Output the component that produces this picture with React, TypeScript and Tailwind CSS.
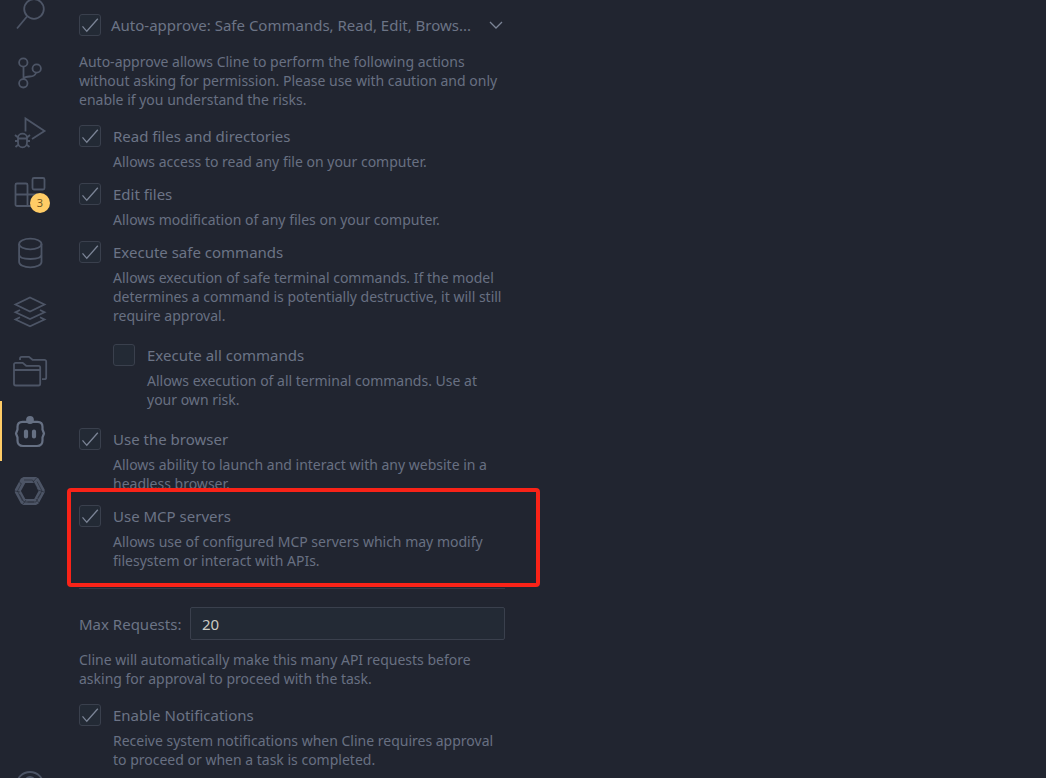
import { useState, type ReactNode } from 'react';

const stroke = 'fill-none stroke-[#4d5566]';

type Entry = { name: string; top: number; height: number; active?: boolean; badge?: string; art: ReactNode };

const entries: Entry[] = [
  {
    name: 'Search', top: 0, height: 41,
    art: <><circle cx="34" cy="9" r="9.8" /><path d="M27 16.5 17 28.5" /></>,
  },
  {
    name: 'Source control', top: 41, height: 60,
    art: <><circle cx="23.3" cy="62.5" r="4.2" /><circle cx="36.7" cy="68.5" r="4.2" /><circle cx="23.3" cy="83.3" r="4.2" /><path d="M23.500 67v12M36 73c-1 2.500-3 3.500-6 3.500-3.500 0-5.500.3-6.500 2.500" /></>,
  },
  {
    name: 'Run and debug', top: 101, height: 60,
    art: <><path d="M25.500 131.500v-13l19 12.500-12.500 8" /><path d="M18 138.500v-1a4.500 3.800 0 0 1 9 0v1M18 138.500h9v4a4.500 4.800 0 0 1-9 0zM15 135l3 2.500M30 135l-3 2.500M15 141h3M27 141h3M15.500 147l3-2.500M29.500 147l-3-2.500" /></>,
  },
  {
    name: 'Extensions', top: 161, height: 60, badge: '3',
    art: <><rect x="32.500" y="178" width="12" height="11.500" rx="1.500" /><path d="M27.500 194.500v-9.500a1.500 1.500 0 0 0-1.500-1.500h-9a1.500 1.500 0 0 0-1.500 1.500v19.500a1.500 1.500 0 0 0 1.500 1.500h20a1.500 1.500 0 0 0 1.500-1.500v-10zM15.500 194.500h12v11.500" /></>,
  },
  {
    name: 'Database', top: 221, height: 60,
    art: <><ellipse cx="30.300" cy="244" rx="11.200" ry="5.300" /><path d="M19.100 244v18c0 3 5 5.300 11.200 5.300s11.200-2.300 11.200-5.300v-18M19.100 254.500c0 3 5 4.500 11.200 4.500s11.200-1.500 11.200-4.500" /></>,
  },
  {
    name: 'Layers', top: 281, height: 60,
    art: <path d="m30 297.500 14.500 7-14.500 7-14.500-7zM20 310l-4.500 2.200 14.500 6.800 14.500-6.800-4.500-2.200M20 317.200l-4.500 2.300 14.500 6.700 14.500-6.700-4.500-2.300" />,
  },
  {
    name: 'Projects', top: 341, height: 60,
    art: <><path d="M14 370v-5.500a1.700 1.700 0 0 1 1.700-1.700h7l3.500 3h12.300a1.700 1.700 0 0 1 1.700 1.700v16.300a1.700 1.700 0 0 1-1.700 1.700H15.700a1.700 1.700 0 0 1-1.700-1.700zh26.200" /><path d="M20 360v-1.500a1.700 1.700 0 0 1 1.700-1.700h7.300l3.500 3h12a1.700 1.700 0 0 1 1.700 1.700v16a1.700 1.700 0 0 1-1.700 1.700H42" /></>,
  },
  {
    name: 'Cline', top: 401, height: 60, active: true,
    art: <><path d="M22.500 421.800h15q5 0 5 5v2.700l1.500 4-1.500 4v3q0 5.500-5.500 5.500h-14q-5.500 0-5.500-5.500v-3l-1.500-4 1.500-4v-2.700q0-5 5-5z" strokeLinejoin="round" strokeWidth="2.2" /><circle cx="30" cy="420" r="3.900" className="fill-[#667083] stroke-none" /><path d="M26 431.500v5M34 431.500v5" strokeWidth="4.200" strokeLinecap="round" /></>,
  },
  {
    name: 'AI assistant', top: 461, height: 60,
    art: <><path d="M23.500 480h12.500l6 11-6 11H23.500L17.500 491z" strokeWidth="6" strokeLinejoin="bevel" /><g className="stroke-[#212530]/70" strokeWidth="0.8"><path d="M24 480h8.500l4.500 8M33 482l3.500-4M37 481.500l5 9.500-4.300 7M38 490l6 2M41 493.500l-5 8.500h-8.500M36 499l3 4M34 502h-10l-4.500-8M26 500l-3 4M22.500 501 17.500 491l4-7.500M20 492l-5-1M21 484l-2-3" /></g></>,
  },
];

const account: Entry = {
  name: 'Account', top: 755, height: 23,
  art: <><circle cx="30" cy="785.500" r="13.500" /><circle cx="30" cy="782" r="5" /></>,
};

function ActivityButton({ entry }: { entry: Entry }) {
  return (
    <button type="button" aria-label={entry.name} className="relative block w-full shrink-0">
      {entry.active && <span className="absolute inset-y-0 left-0 w-0.5 bg-[#ffcc66]" />}
      <svg
        width="60"
        height={entry.height}
        viewBox={`0 ${entry.top} 60 ${entry.height}`}
        strokeWidth="1.8"
        className={entry.active ? 'block fill-none stroke-[#667083]' : `block ${stroke}`}
      >
        {entry.art}
      </svg>
      {entry.badge && (
        <span className="absolute right-2.5 bottom-2 flex size-5 items-center justify-center rounded-full bg-[#ffcc66] text-[11px] text-[#735923]">
          {entry.badge}
        </span>
      )}
    </button>
  );
}

function Check({ id, initial = true, label }: { id: string; initial?: boolean; label?: string }) {
  const [checked, setChecked] = useState(initial);
  return (
    <span className="grid size-[22px] shrink-0">
      <input
        id={id}
        type="checkbox"
        aria-label={label}
        checked={checked}
        onChange={(e) => setChecked(e.target.checked)}
        className="col-start-1 row-start-1 size-[22px] appearance-none rounded-[3px] border border-[#3a404d] bg-[#232a35]"
      />
      {checked && (
        <svg viewBox="0 0 22 22" className="pointer-events-none col-start-1 row-start-1 size-[22px] fill-none stroke-[#7b8496]" strokeWidth="1.3">
          <path d="m3.500 12.300 4.300 5L18.800 4.800" />
        </svg>
      )}
    </span>
  );
}

type OptionProps = { id: string; title: string; lines: string[]; initial?: boolean; children?: ReactNode };

function Option({ id, title, lines, initial, children }: OptionProps) {
  return (
    <div className="relative">
      <div className="flex h-[22px] items-center gap-3">
        <Check id={id} initial={initial} />
        <label htmlFor={id} className="text-[15px] leading-6 whitespace-nowrap">{title}</label>
      </div>
      <Lines lines={lines} className="mt-[5px] pl-[34px]" />
      {children}
    </div>
  );
}

function Lines({ lines, className = '' }: { lines: string[]; className?: string }) {
  return (
    <p className={`text-sm leading-[19px] whitespace-nowrap text-[#687082] ${className}`}>
      {lines.map((line) => <span key={line} className="block">{line}</span>)}
    </p>
  );
}

export default function App() {
  return (
    <div className="flex h-screen overflow-hidden bg-[#212530] font-['Noto_Sans',sans-serif] text-[#6c7486]">
      <nav aria-label="Activity bar" className="flex w-15 shrink-0 flex-col justify-between">
        <div>{entries.map((entry) => <ActivityButton key={entry.name} entry={entry} />)}</div>
        <ActivityButton entry={account} />
      </nav>

      <main className="w-full max-w-[445px] pt-3.5 pl-[19px]">
        <div className="flex h-[22px] items-center">
          <Check id="auto" label="Enable auto-approve" />
          <button type="button" aria-expanded="true" className="ml-2.5 flex min-w-0 flex-1 items-center justify-between pr-0.5 text-left">
            <span className="text-[15px] leading-6 whitespace-nowrap">Auto-approve: Safe Commands, Read, Edit, Brows...</span>
            <svg viewBox="0 0 14 8" className="h-2 w-3.5 shrink-0 fill-none stroke-[#7b8496]" strokeWidth="1.3"><path d="m1 1 6 6 6-6" /></svg>
          </button>
        </div>

        <Lines
          className="mt-4"
          lines={[
            'Auto-approve allows Cline to perform the following actions',
            'without asking for permission. Please use with caution and only',
            'enable if you understand the risks.',
          ]}
        />

        <div className="mt-4 flex flex-col gap-3">
          <Option id="read" title="Read files and directories" lines={['Allows access to read any file on your computer.']} />
          <Option id="edit" title="Edit files" lines={['Allows modification of any files on your computer.']} />
          <Option
            id="safe"
            title="Execute safe commands"
            lines={['Allows execution of safe terminal commands. If the model', 'determines a command is potentially destructive, it will still', 'require approval.']}
          >
            <div className="mt-[19px] mb-[7px] pl-[34px]">
              <Option
                id="all"
                title="Execute all commands"
                initial={false}
                lines={['Allows execution of all terminal commands. Use at', 'your own risk.']}
              />
            </div>
          </Option>
          <Option id="browser" title="Use the browser" lines={['Allows ability to launch and interact with any website in a', 'headless browser.']} />
          <Option id="mcp" title="Use MCP servers" lines={['Allows use of configured MCP servers which may modify', 'filesystem or interact with APIs.']}>
            <div className="pointer-events-none absolute -inset-y-[17px] -right-[35px] -left-3 rounded-sm border-4 border-[#f92318]" />
          </Option>
        </div>

        <hr className="mt-[18px] border-[#343a46]" />

        <div className="mt-[18px] flex items-center gap-2">
          <label htmlFor="max" className="w-[103px] text-[15px] leading-6 whitespace-nowrap">Max Requests:</label>
          <input
            id="max"
            type="text"
            defaultValue="20"
            className="h-[33px] min-w-0 flex-1 rounded-xs border border-[#3a404d] bg-[#232a35] px-[11px] text-[15px] text-[#cccac2]"
          />
        </div>
        <Lines
          className="mt-2.5 mb-4"
          lines={['Cline will automatically make this many API requests before', 'asking for approval to proceed with the task.']}
        />
        <Option id="notify" title="Enable Notifications" lines={['Receive system notifications when Cline requires approval', 'to proceed or when a task is completed.']} />
      </main>
    </div>
  );
}
